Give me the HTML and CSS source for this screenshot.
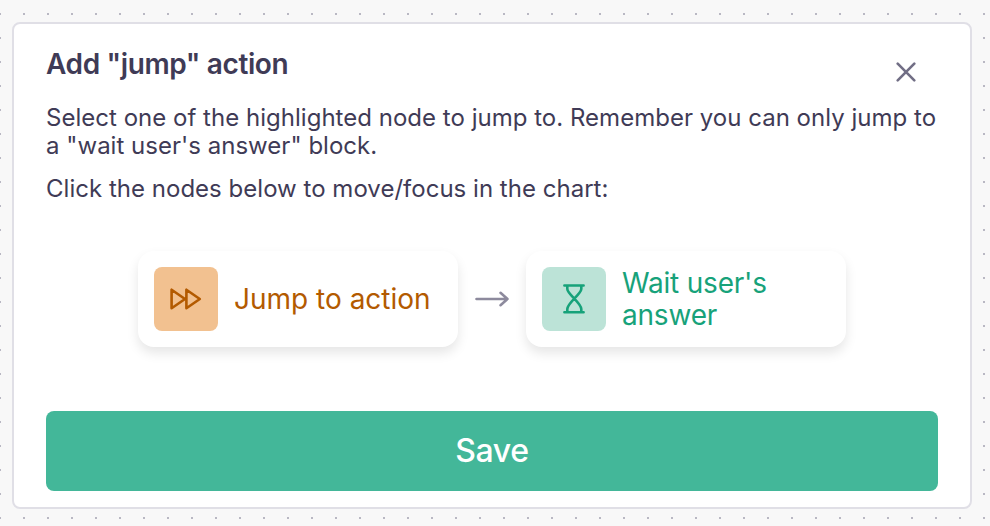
FILE: index.html
```html
<!DOCTYPE html>
<html lang="en">
<head>
<meta charset="utf-8">
<title>Add "jump" action</title>
<link rel="stylesheet" href="styles.css">
</head>
<body>
<main class="panel">
  <header class="panel-header">
    <h1 class="title">Add "jump" action</h1>
    <button class="close" aria-label="Close">
      <svg width="20" height="20" viewBox="0 0 20 20"><path d="M1.7 1.7 18.3 18.3M18.3 1.7 1.7 18.3"/></svg>
    </button>
  </header>
  <p class="text">Select one of the highlighted node to jump to. Remember you can only jump to a "wait user's answer" block.</p>
  <p class="text">Click the nodes below to move/focus in the chart:</p>
  <div class="nodes">
    <div class="node node-jump">
      <span class="node-icon">
        <svg width="64" height="64" viewBox="0 0 64 64"><path d="M17.6 22.7V41.3L31 32ZM32.4 22.7V41.3L45.8 32Z"/></svg>
      </span>
      <span class="node-label">Jump to action</span>
    </div>
    <svg class="arrow" width="36" height="20" viewBox="0 0 36 20"><path d="M2.5 10H33.5M26.5 3.8 33.5 10 26.5 16.2"/></svg>
    <div class="node node-wait">
      <span class="node-icon">
        <svg width="64" height="64" viewBox="0 0 64 64"><path d="M22.4 18.5H41.6M22.4 45.3H41.6M25.3 18.5V22C25.3 27 39.3 36 39.3 42V45.3M39.3 18.5V22C39.3 27 25.3 36 25.3 42V45.3"/></svg>
      </span>
      <span class="node-label">Wait user's answer</span>
    </div>
  </div>
  <button class="save">Save</button>
</main>
</body>
</html>
```
FILE: styles.css
```css
* {
  box-sizing: border-box;
}

body {
  margin: 0;
  height: 526px;
  padding: 22px 18px 17px 12px;
  overflow: hidden;
  font-family: Inter, sans-serif;
  color: #3f3b56;
  background-color: #f8f8f8;
  background-image: conic-gradient(from 90deg at 22px 22px, #b9b8c3 25%, transparent 0);
  background-size: 24px 24px;
  background-position: 1px -9px;
}

.panel {
  height: 487px;
  padding: 22px 32px 0;
  border: 2px solid #e0dfe6;
  border-radius: 8px;
  background: #fff;
}

.panel-header {
  display: flex;
  justify-content: space-between;
  height: 58px;
}

.title {
  margin: 0;
  font-size: 28px;
  line-height: 36px;
  font-weight: 600;
  letter-spacing: -0.38px;
}

.close {
  width: 64px;
  height: 52px;
  padding: 0;
  border: 0;
  background: none;
}

svg {
  display: block;
  fill: none;
  stroke-width: 2.6;
  stroke-linecap: round;
  stroke-linejoin: round;
}

.close svg {
  margin: 0 auto;
  stroke: #716e85;
}

.text {
  margin: 0 0 15px;
  font-size: 24px;
  line-height: 28px;
  letter-spacing: 0.02px;
}

.nodes {
  display: flex;
  align-items: center;
  justify-content: center;
  gap: 16px;
  margin-top: 48px;
}

.node {
  display: flex;
  align-items: center;
  gap: 16px;
  width: 320px;
  height: 96px;
  padding: 0 16px;
  border-radius: 16px;
  box-shadow: 0 6px 12px rgba(0, 0, 0, 0.1);
  font-size: 28px;
  line-height: 32px;
}

.node-icon {
  flex: none;
  border-radius: 8px;
}

.node-jump {
  color: #b35a00;
}

.node-jump .node-icon {
  background: #f2c190;
}

.node-wait {
  color: #17a27a;
}

.node-wait .node-icon {
  background: #bce3d7;
}

.node-wait .node-label {
  letter-spacing: -0.2px;
}

.node-icon svg {
  stroke: currentColor;
}

.arrow {
  stroke: #8d8a9d;
}

.save {
  display: block;
  width: 100%;
  height: 80px;
  margin-top: 64px;
  padding: 0;
  border: 0;
  border-radius: 8px;
  background: #43b799;
  color: #fff;
  font: 500 32px/80px Inter, sans-serif;
  letter-spacing: -0.3px;
}
```
